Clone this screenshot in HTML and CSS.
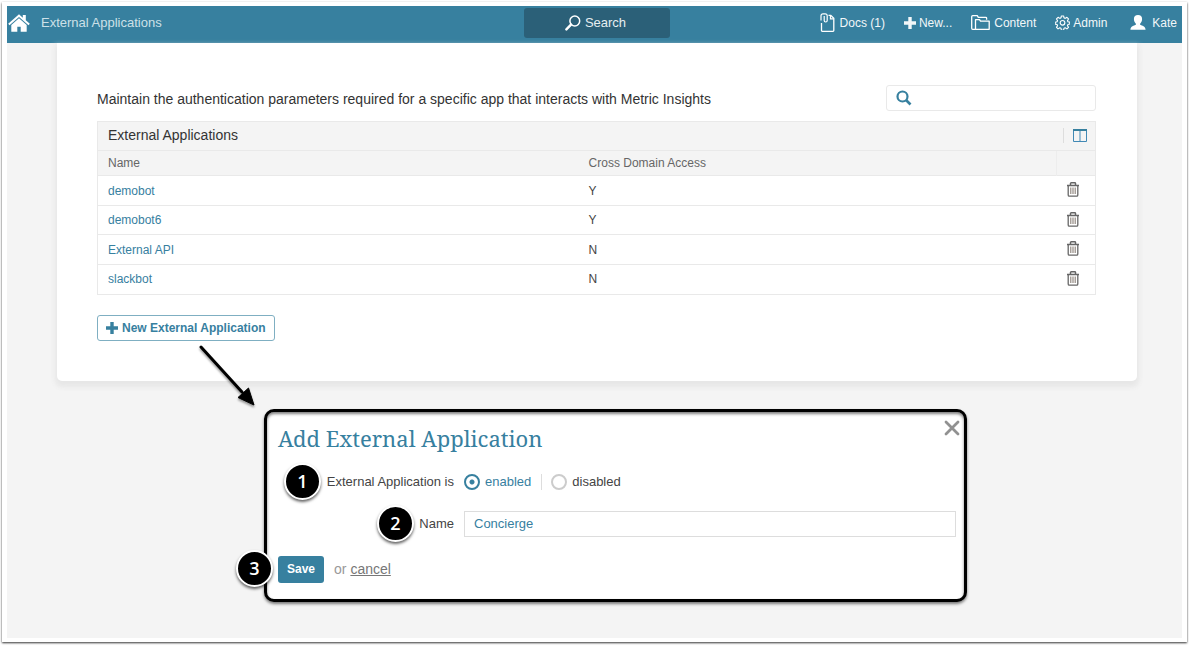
FILE: index.html
```html
<!DOCTYPE html>
<html lang="en">
<head>
<meta charset="utf-8">
<title>External Applications</title>
<link rel="stylesheet" href="styles.css">
</head>
<body>
<svg class="sprite" aria-hidden="true">
  <symbol id="trash" viewBox="0 0 14 15">
    <path d="M1 3.5h12M4.5 3V1.5q0-.7.8-.7h3.4q.8 0 .8.7V3" fill="none" stroke="#666" stroke-width="1.5"/>
    <path d="M2.2 3.5v9.5q0 1.2 1.1 1.2h7.4q1.1 0 1.1-1.2V3.5" fill="none" stroke="#666" stroke-width="1.3"/>
    <path d="M4.8 5.5v6.500M7 5.500v6.500M9.200 5.500v6.500" stroke="#8a8078" stroke-width="1.100"/>
  </symbol>
  <symbol id="plus" viewBox="0 0 12 12">
    <path d="M4.300 0h3.400v4.300H12v3.400H7.700V12H4.300V7.700H0V4.300h4.300z" fill="currentColor"/>
  </symbol>
</svg>
<div class="frame">
  <div class="page">
    <header class="topbar">
      <div class="brand">
        <a href="#" class="home" aria-label="Home">
          <svg width="22" height="18" viewBox="0 0 22 18"><path d="M11 .3 14.800 3.700V1h3v5.300l4 3.500-1.300 1.500L11 3 1.500 11.300.2 9.800z" fill="#fff"/><path d="M3.300 11 11 4.300 18.700 11v6.700h-6v-5h-3.400v5h-6z" fill="#fff"/></svg>
        </a>
        <span class="crumb">External Applications</span>
      </div>
      <button type="button" class="search-button">
        <svg width="16" height="16" viewBox="0 0 16 16"><circle cx="9.800" cy="6" r="4.900" fill="none" stroke="#fff" stroke-width="1.500"/><path d="M6 9.600 1.400 14.400" stroke="#fff" stroke-width="2.400" stroke-linecap="round"/></svg>
        Search
      </button>
      <nav class="menu">
        <a href="#" class="wide">
          <svg width="15" height="19" viewBox="0 0 15 19" fill="none" stroke="#fff" stroke-width="1.300"><path d="M8.500 2.300h2.300l3 3v12.200q0 .8-.8.8H2.300q-.8 0-.8-.8V10"/><path d="M10.500 2.500v3.300h3.200"/><path d="M1 7.500V2.800Q1 .8 3 .8h2.200q2 0 2 2v4.700q0 1.500-1.500 1.500T4.200 7.500V3" stroke-width="1.200"/></svg>
          Docs (1)
        </a>
        <a href="#"><svg width="12" height="12"><use href="#plus"/></svg>New...</a>
        <a href="#" class="folder">
          <svg width="19" height="16" viewBox="0 0 19 16" fill="none" stroke="#fff" stroke-width="1.300" stroke-linejoin="round"><path d="M4.500 14.300H1.700q-1 0-1-1V1.700q0-1 1-1h4.600l1 1.600h7.500q.8 0 .8.800v1.600"/><path d="M4.500 14.300V4.700h4l1 1.500h8.700v8.100z"/></svg>
          Content
        </a>
        <a href="#">
          <svg width="15" height="15" viewBox="0 0 16 16" fill="none" stroke="#fff" stroke-width="1.200" stroke-linejoin="round"><path d="M6.800 1h2.400l.4 2 1.300.6 1.800-1.100 1.700 1.700-1.100 1.800.5 1.200 2 .4v2l-2 .5-.5 1.200 1.100 1.800-1.700 1.700-1.800-1.100-1.300.5-.4 2H6.800l-.4-2-1.300-.5-1.800 1.100-1.700-1.700 1.100-1.800-.5-1.200-2-.4v-2l2-.5.5-1.200-1.100-1.800 1.700-1.700 1.800 1.100 1.300-.6z"/><circle cx="8" cy="8.300" r="2.500"/></svg>
          Admin
        </a>
        <a href="#" class="wide user">
          <svg width="16" height="15" viewBox="0 0 16 15" fill="#fff"><path d="M8 0c2.600 0 4.100 1.600 4.100 4 0 2-.9 3.700-2 4.700v1c2 .9 5.200 1.300 5.500 5.100H.4c.3-3.800 3.500-4.200 5.500-5.100v-1c-1.100-1-2-2.700-2-4.700C3.900 1.600 5.400 0 8 0z"/></svg>
          Kate
        </a>
      </nav>
    </header>

    <main>
      <section class="card">
        <div class="intro">
          <p>Maintain the authentication parameters required for a specific app that interacts with Metric Insights</p>
          <label class="filter">
            <svg width="16" height="16" viewBox="0 0 16 16" fill="none" stroke="#37809f"><circle cx="6.500" cy="6.500" r="5" stroke-width="2.200"/><path d="M10 10l4.500 4.500" stroke-width="2.600"/></svg>
            <input type="text" aria-label="Filter applications">
          </label>
        </div>

        <div class="grid-box">
          <div class="grid-title">
            <h2>External Applications</h2>
            <button type="button" class="columns" aria-label="Columns">
              <svg width="14" height="13" viewBox="0 0 14 13"><path d="M.5 1v11.500h13V1M7 2v10.500" fill="none" stroke="#4189b5"/><path d="M0 0h14v2H0z" fill="#37809f"/></svg>
            </button>
          </div>
          <table>
            <colgroup><col class="col-name"><col><col class="col-action"></colgroup>
            <thead><tr><th>Name</th><th>Cross Domain Access</th><th></th></tr></thead>
            <tbody>
              <tr><td><a href="#">demobot</a></td><td>Y</td><td><button type="button" class="trash" aria-label="Delete demobot"><svg width="14" height="15"><use href="#trash"/></svg></button></td></tr>
              <tr><td><a href="#">demobot6</a></td><td>Y</td><td><button type="button" class="trash" aria-label="Delete demobot6"><svg width="14" height="15"><use href="#trash"/></svg></button></td></tr>
              <tr><td><a href="#">External API</a></td><td>N</td><td><button type="button" class="trash" aria-label="Delete External API"><svg width="14" height="15"><use href="#trash"/></svg></button></td></tr>
              <tr><td><a href="#">slackbot</a></td><td>N</td><td><button type="button" class="trash" aria-label="Delete slackbot"><svg width="14" height="15"><use href="#trash"/></svg></button></td></tr>
            </tbody>
          </table>
        </div>

        <button type="button" class="new-app"><svg width="12" height="12"><use href="#plus"/></svg>New External Application</button>
      </section>

      <form class="dialog">
        <svg class="arrow" width="62" height="68" viewBox="0 0 62 68" aria-hidden="true"><path d="M4 4 45 49" stroke="#000" stroke-width="3" stroke-linecap="round"/><path d="M57 62 41 54.500 51.500 45z" stroke="#000" stroke-linejoin="round"/></svg>
        <button type="button" class="close" aria-label="Close"><svg width="16" height="16" viewBox="0 0 16 16"><path d="M2 2l12 12M14 2 2 14" stroke="#919191" stroke-width="2.800" stroke-linecap="round"/></svg></button>
        <h1>Add External Application</h1>
        <div class="field" role="radiogroup" aria-labelledby="state">
          <span class="badge first">1</span>
          <span class="label" id="state">External Application is</span>
          <div class="options">
            <label><input type="radio" name="state" checked>enabled</label>
            <label><input type="radio" name="state">disabled</label>
          </div>
        </div>
        <div class="field">
          <span class="badge second">2</span>
          <label class="label" for="name">Name</label>
          <input class="text" id="name" type="text" value="Concierge">
        </div>
        <div class="actions">
          <span class="badge third">3</span>
          <button type="submit" class="save">Save</button>
          <span>or <a href="#">cancel</a></span>
        </div>
      </form>
    </main>
  </div>
</div>
</body>
</html>
```
FILE: styles.css
```css
* { box-sizing: border-box; }

body {
  margin: 0;
  padding: 2px 2px 4px;
  min-height: 100vh;
  display: flex;
  background: #fff;
  color: #444;
  font: 13px/16px "Liberation Sans", Arial, sans-serif;
}

h1, h2, p { margin: 0; font-weight: normal; }
a { color: #37809f; text-decoration: none; }
button, input { font: inherit; }
button { padding: 0; border: 0; background: none; cursor: pointer; }
svg { display: block; flex: none; }
.sprite { position: absolute; width: 0; height: 0; }

.frame {
  flex: 1;
  display: flex;
  padding: 4px 5px;
  background: #fff;
  box-shadow: 0 1px 2px rgba(0, 0, 0, .8);
}
.page { flex: 1; background: #f4f4f4; }

/* Top bar */
.topbar {
  display: grid;
  grid-template-columns: 516fr 146px 507fr;
  align-items: center;
  height: 37px;
  padding: 0 5px 4px 1px;
  background: #37809f;
  color: #fff;
}
.brand { display: flex; align-items: center; gap: 11px; }
.crumb { color: #cde0e8; }
.search-button {
  display: flex;
  align-items: center;
  justify-content: center;
  gap: 4px;
  height: 30px;
  padding-right: 3px;
  border-radius: 3px;
  background: #2b6078;
  color: #e6eef1;
}
.menu { display: flex; justify-content: flex-end; gap: 19px; font-size: 12px; }
.menu a { display: flex; align-items: center; gap: 3px; color: #f2f7f9; white-space: nowrap; }
.menu .wide { gap: 5px; }
.menu .folder { gap: 4px; }
.menu .user { gap: 6px; margin-left: 4px; }

/* Card */
.card {
  margin: 0 45px 0 50px;
  padding: 42px 41px 40px 40px;
  border-radius: 0 0 5px 5px;
  background: #fff;
  box-shadow: 0 4px 5px 2px #e7e7e7;
}
.intro {
  display: flex;
  align-items: center;
  justify-content: space-between;
  margin-bottom: 10px;
  color: #333;
  font-size: 14px;
}
.intro p { line-height: 18px; padding-top: 2px; }
.filter {
  display: flex;
  align-items: center;
  width: 210px;
  height: 26px;
  padding: 0 9px;
  border: 1px solid #e9e9e9;
  border-radius: 3px;
}
.filter input { flex: 1; min-width: 0; border: 0; outline: 0; background: none; }

.grid-box { border: 1px solid #e9e9e9; }
.grid-title {
  display: flex;
  align-items: center;
  justify-content: space-between;
  height: 28px;
  padding: 0 8px 2px 10px;
  background: #f4f4f4;
}
.grid-title h2 { color: #333; font-size: 14px; }
.columns { padding: 1px 0 1px 9px; border-left: 1px solid #ddd; }

table { width: 100%; border-collapse: collapse; table-layout: fixed; font-size: 12px; }
.col-name { width: 48.200%; }
.col-action { width: 39px; }
th, td { height: 30px; padding: 0 10px; border-top: 1px solid #e9e9e9; text-align: left; font-weight: normal; }
tr:nth-child(even) td { height: 29px; }
th { height: 25px; background: #f4f4f4; color: #666; }
th:last-child { border-left: 1px solid #ededed; }
td:last-child { padding: 0 10px 2px; }
.trash { display: block; }

.new-app {
  display: flex;
  align-items: center;
  gap: 4px;
  height: 26px;
  margin-top: 20px;
  padding: 0 8px;
  border: 1px solid #7fafc2;
  border-radius: 3px;
  background: #fff;
  color: #37809f;
  font-size: 12px;
  font-weight: bold;
}

/* Dialog */
.dialog {
  position: relative;
  margin: 28px 215px 0 257px;
  padding: 13px 8px 16px 11px;
  border: 3px solid #000;
  border-radius: 10px;
  background: #fff;
  box-shadow: 0 2px 3px rgba(0, 0, 0, .5), inset 0 2px 3px rgba(0, 0, 0, .5);
}
.dialog h1 {
  color: #37809f;
  font: 22px/26px "Droid Serif", "Noto Serif", "DejaVu Serif", serif;
}
.close { position: absolute; top: 8px; right: 4px; }
.arrow { position: absolute; top: -69px; left: -70px; filter: drop-shadow(0 2px 1px rgba(0, 0, 0, .4)); }

.field {
  position: relative;
  display: grid;
  grid-template-columns: 176px 1fr;
  align-items: center;
  column-gap: 10px;
  height: 26px;
  margin-top: 18px;
}
.label { text-align: right; }
.options { display: flex; }
.options label { display: flex; align-items: center; gap: 5px; }
.options label:first-child { padding-right: 10px; border-right: 1px solid #ddd; color: #37809f; }
.options label:last-child { padding-left: 9px; }
.options input {
  appearance: none;
  width: 16px;
  height: 16px;
  margin: 0;
  border: 2px solid #ccc;
  border-radius: 50%;
}
.options input:checked {
  border-color: #37809f;
  background: radial-gradient(circle, #37809f 2px, transparent 3px);
}
.text {
  width: 100%;
  height: 26px;
  padding: 0 9px;
  border: 1px solid #ddd;
  color: #37809f;
}
.field + .field { margin-top: 16px; }

.actions {
  position: relative;
  display: flex;
  align-items: center;
  gap: 10px;
  margin-top: 19px;
  color: #999;
  font-size: 14px;
}
.actions a { color: #777; text-decoration: underline; }
.save {
  height: 27px;
  padding: 0 9px;
  border-radius: 3px;
  background: #37809f;
  color: #fff;
  font-size: 12px;
  font-weight: bold;
}

.badge {
  position: absolute;
  top: -6px;
  width: 37px;
  height: 37px;
  border: 2px solid #fff;
  border-radius: 50%;
  background: #000;
  box-shadow: 0 2px 3px rgba(0, 0, 0, .6);
  color: #fff;
  font: 600 18px/33px "Open Sans", sans-serif;
  text-align: center;
}
.first { left: 6px; }
.second { left: 99px; }
.third { left: -42px; }
```
